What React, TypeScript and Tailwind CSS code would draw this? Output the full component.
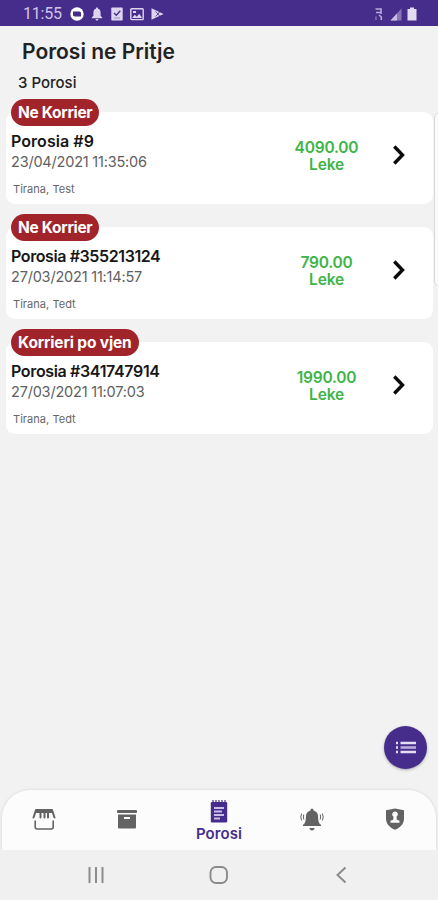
type Order = {
  status: string;
  id: string;
  date: string;
  place: string;
  price: string;
  idTracking: string;
  dateTracking: string;
  statusTracking: string;
};

const orders: Order[] = [
  { status: "Ne Korrier", id: "9", date: "23/04/2021 11:35:06", place: "Tirana, Test", price: "4090.00", idTracking: "tracking-[0.05px]", dateTracking: "tracking-[-0.2px]", statusTracking: "tracking-[-0.3px]" },
  { status: "Ne Korrier", id: "355213124", date: "27/03/2021 11:14:57", place: "Tirana, Tedt", price: "790.00", idTracking: "tracking-[-0.4px]", dateTracking: "tracking-[-0.2px]", statusTracking: "tracking-[-0.3px]" },
  { status: "Korrieri po vjen", id: "341747914", date: "27/03/2021 11:07:03", place: "Tirana, Tedt", price: "1990.00", idTracking: "tracking-[-0.35px]", dateTracking: "tracking-[-0.2px]", statusTracking: "tracking-[-0.15px]" },
];

function StatusBar() {
  return (
    <header className="flex h-[26px] shrink-0 items-center bg-[#472d8b] pl-[23px] pr-[21px] pt-[2px] text-[#ddd5ef]">
      <span className="w-[40px] whitespace-nowrap font-['Roboto',sans-serif] text-[16px] leading-5 tracking-[-0.2px] text-[#cfc5e8]">11:55</span>
      <svg className="ml-[7px] h-[14px] w-[14px]" viewBox="0 0 14 14">
        <circle cx="7" cy="7" r="6.7" fill="#fff" />
        <path d="M3 4.5h6.500l1.500 1v4H4.500L3 8.500z" fill="#472d8b" />
      </svg>
      <svg className="ml-[7px] h-[14px] w-[12px]" viewBox="0 0 12 14" fill="currentColor">
        <path d="M6 .5c.8 0 1.100.5 1.100 1.200 1.800.5 2.500 2 2.500 3.800v3.200l1.600 1.700v.9H.8v-.9l1.600-1.700V5.500c0-1.800.7-3.300 2.500-3.800C4.900 1 5.200.5 6 .5zM4.600 12h2.800c0 2-2.800 2-2.800 0z" />
      </svg>
      <svg className="ml-[8px] h-[14px] w-[12px]" viewBox="0 0 12 14">
        <rect x=".3" y=".5" width="11.400" height="13" rx=".8" fill="currentColor" />
        <path d="M3 6l2.300 2.300 4-4.500" fill="none" stroke="#472d8b" strokeWidth="1.300" />
        <path d="M3 11h6" stroke="#9a8bc4" />
      </svg>
      <svg className="ml-[7px] h-[14px] w-[14px]" viewBox="0 0 14 14">
        <rect x=".8" y="1.800" width="12.400" height="10.800" rx=".8" fill="none" stroke="currentColor" strokeWidth="1.400" />
        <path d="M2 11l2.800-3.300 2 2 2.400-3 3 4.300zM3 4h3v2H3z" fill="currentColor" />
      </svg>
      <svg className="ml-[7px] h-[14px] w-[13px]" viewBox="0 0 13 14">
        <path d="M.5 1.200L12.500 7 .5 12.800z" fill="currentColor" />
        <path d="M4.500 4.500L7 7l-2.500 2.500M7 7l2-2.500M7 7l2 2.500" fill="none" stroke="#472d8b" strokeWidth=".8" />
      </svg>
      <svg className="ml-auto h-[14px] w-[9px]" viewBox="0 0 9 14" fill="none" stroke="#b8acd9" strokeWidth="1.600">
        <path d="M1.500 2h5.500v5M2 5.500h5M5 8l2.300 2v3" />
        <path d="M2 9.500v3.500" strokeOpacity=".5" />
      </svg>
      <svg className="ml-[7px] h-[13px] w-[12px]" viewBox="0 0 12 13">
        <path d="M11.500.5v12H.5z" fill="#8876b9" />
        <path d="M7 5.500v7H.5z" fill="#c8bde3" />
      </svg>
      <svg className="ml-[5px] h-[14px] w-[10px]" viewBox="0 0 10 14" fill="#e2dbf1">
        <path d="M3 .5h4V2h2.500v11.500H.5V2H3z" />
      </svg>
    </header>
  );
}

function OrderCard({ order }: { order: Order }) {
  return (
    <article className="flex h-[92px] rounded-[9px] bg-white pl-[5px]">
      <div className="-mt-[13px] w-[270px] whitespace-nowrap">
        <div className={`flex h-[27px] w-fit items-center rounded-full bg-[#a2242b] px-[7px] text-[15.5px] font-bold text-white ${order.statusTracking}`}>
          {order.status}
        </div>
        <h2 className={`mt-[5px] text-[16px] font-semibold leading-5 text-[#171717] ${order.idTracking}`}>Porosia #{order.id}</h2>
        <p className={`mt-px text-[14.5px] leading-5 text-[#606060] ${order.dateTracking}`}>{order.date}</p>
        <p className="ml-[2px] mt-[9px] text-[11px] leading-4 tracking-[0.05px] text-[#666]">{order.place}</p>
      </div>
      <div className="mt-[27px] w-[91px] text-center text-[15.5px] font-semibold leading-[17px] tracking-[-0.2px] text-[#3eb449]">
        <p>{order.price}</p>
        <p>Leke</p>
      </div>
      <svg className="ml-[20px] mt-[32px] h-[22px] w-[14px]" viewBox="0 0 14 22" fill="none" stroke="#0b0b0b" strokeWidth="3.400">
        <path d="M2.300 2.500l8.200 8.500-8.200 8.500" />
      </svg>
    </article>
  );
}

function TabBar() {
  return (
    <nav className="mx-[2px] grid h-[60px] shrink-0 grid-cols-[83px_83px_102px_83px_83px] rounded-t-[28px] bg-[#fcfcfc] text-[#636363] shadow-[0_0_3px_#d2d2d2]">
      <div className="flex justify-center pt-[18px]">
        <svg className="h-[23px] w-[24px]" viewBox="0 0 24 23" fill="none" stroke="currentColor">
          <path d="M4 2L1.500 9.500M8.500 2v7.500M12.500 2v7.500M16 2v7.500M20 2l2.500 7.500" strokeWidth="2" strokeLinecap="round" />
          <path d="M4 1h16l1.300 4H2.700z" fill="currentColor" stroke="none" />
          <path d="M3.200 12.500v6.500q0 2 2 2h14q2 0 2-2v-6.500" strokeWidth="1.600" />
        </svg>
      </div>
      <div className="flex justify-center pt-[20px]">
        <svg className="h-[20px] w-[20px]" viewBox="0 0 20 20" fill="currentColor">
          <rect width="20" height="3" rx="1" />
          <path d="M1 4.500h18v13a1 1 0 0 1-1 1H2a1 1 0 0 1-1-1zM7 7v2h6V7z" fillRule="evenodd" />
        </svg>
      </div>
      <div className="flex flex-col items-center pt-[9px] text-[#472d8b]">
        <svg className="h-[24px] w-[18px]" viewBox="0 0 18 24">
          <rect x=".8" y="3" width="16.400" height="20.500" rx="1.300" fill="currentColor" />
          <path d="M3 1v3M6 1v3M9 1v3M12 1v3M15 1v3" stroke="currentColor" strokeWidth="1.200" />
          <path d="M4 9h10M4 12.500h8M4 16h10M4 19.500h6" stroke="#c9bee5" strokeWidth="2.200" />
        </svg>
        <span className="mt-[1px] text-[15px] font-semibold leading-5 tracking-[0.1px]">Porosi</span>
      </div>
      <div className="flex justify-center pt-[18px]">
        <svg className="h-[24px] w-[24px]" viewBox="0 0 24 24" fill="currentColor">
          <path d="M12 .8c1.200 0 1.600.7 1.600 1.600 3 .8 4.500 3.200 4.500 5.800 0 5.300 1 7.300 2.900 8.600V18H3v-1.200c1.900-1.300 2.900-3.300 2.900-8.600 0-2.600 1.500-5 4.500-5.800 0-.9.400-1.600 1.600-1.600zM9.500 20h5c0 3.200-5 3.200-5 0z" />
          <path d="M3.800 6.500q-1 2.500 0 5M1.600 5.500q-1.600 3.500 0 7M20.200 6.500q1 2.500 0 5M22.400 5.500q1.600 3.500 0 7" fill="none" stroke="currentColor" strokeWidth="1" />
        </svg>
      </div>
      <div className="flex justify-center pt-[18px]">
        <svg className="h-[22px] w-[20px]" viewBox="0 0 20 22">
          <path d="M10 .5l9 1.800v8.200c0 5.500-4 9.500-9 11.200-5-1.700-9-5.700-9-11.200V2.300z" fill="currentColor" />
          <path d="M10 3.500a2.800 2.800 0 0 1 1.500 5.200l.3 3 2.700 1v2h-9v-2l2.700-1 .3-3A2.800 2.800 0 0 1 10 3.500z" fill="#fcfcfc" />
        </svg>
      </div>
    </nav>
  );
}

function SystemNav() {
  return (
    <footer className="flex h-[50px] shrink-0 items-center bg-[#f0f0f0] pl-[87px] text-[#8b8b8b]">
      <svg className="h-[18px] w-[18px]" viewBox="0 0 18 18" stroke="currentColor" strokeWidth="2">
        <path d="M2.500 1v16M9 1v16M15.500 1v16" />
      </svg>
      <svg className="ml-[104px] h-[20px] w-[20px]" viewBox="0 0 20 20" fill="none" stroke="currentColor" strokeWidth="1.900">
        <rect x="1.500" y="2" width="16.500" height="16" rx="5.500" />
      </svg>
      <svg className="ml-[106px] h-[18px] w-[13px]" viewBox="0 0 13 18" fill="none" stroke="currentColor" strokeWidth="2">
        <path d="M10.500 1.500L2.500 9l8 7.500" />
      </svg>
    </footer>
  );
}

export default function App() {
  return (
    <div className="relative flex h-[900px] w-[438px] flex-col overflow-hidden bg-[#f2f2f2] font-['Inter',sans-serif]">
      <StatusBar />
      <main className="flex-1">
        <h1 className="ml-[22px] mt-[12px] text-[21px] font-semibold leading-7 text-[#222]">Porosi ne Pritje</h1>
        <p className="ml-[18px] mt-[7px] text-[15px] font-medium leading-5 text-[#222]">3 Porosi</p>
        <section className="ml-[6px] mt-[19px] flex w-[427px] flex-col gap-[23px]">
          {orders.map((order) => (
            <OrderCard key={order.id} order={order} />
          ))}
        </section>
      </main>
      <TabBar />
      <SystemNav />
      <div className="absolute left-[434px] top-[112px] h-[175px] w-3 rounded-l-[6px] border border-[#d9d9d9] bg-[#fafafa]" />
      <button aria-label="Menu" className="absolute left-[384px] top-[726px] flex h-[43px] w-[43px] items-center justify-center rounded-full bg-[#472d8b] shadow-[0_1px_3px_#aaa]">
        <svg className="h-[13px] w-[20px]" viewBox="0 0 20 13" stroke="#e5def4">
          <path d="M0 2h2M4.500 2H20M0 6.500h2M0 11h2M4.500 11H20" strokeWidth="2.400" />
          <path d="M4.500 6.500H20" stroke="#b9addb" strokeWidth="2.600" />
        </svg>
      </button>
    </div>
  );
}
